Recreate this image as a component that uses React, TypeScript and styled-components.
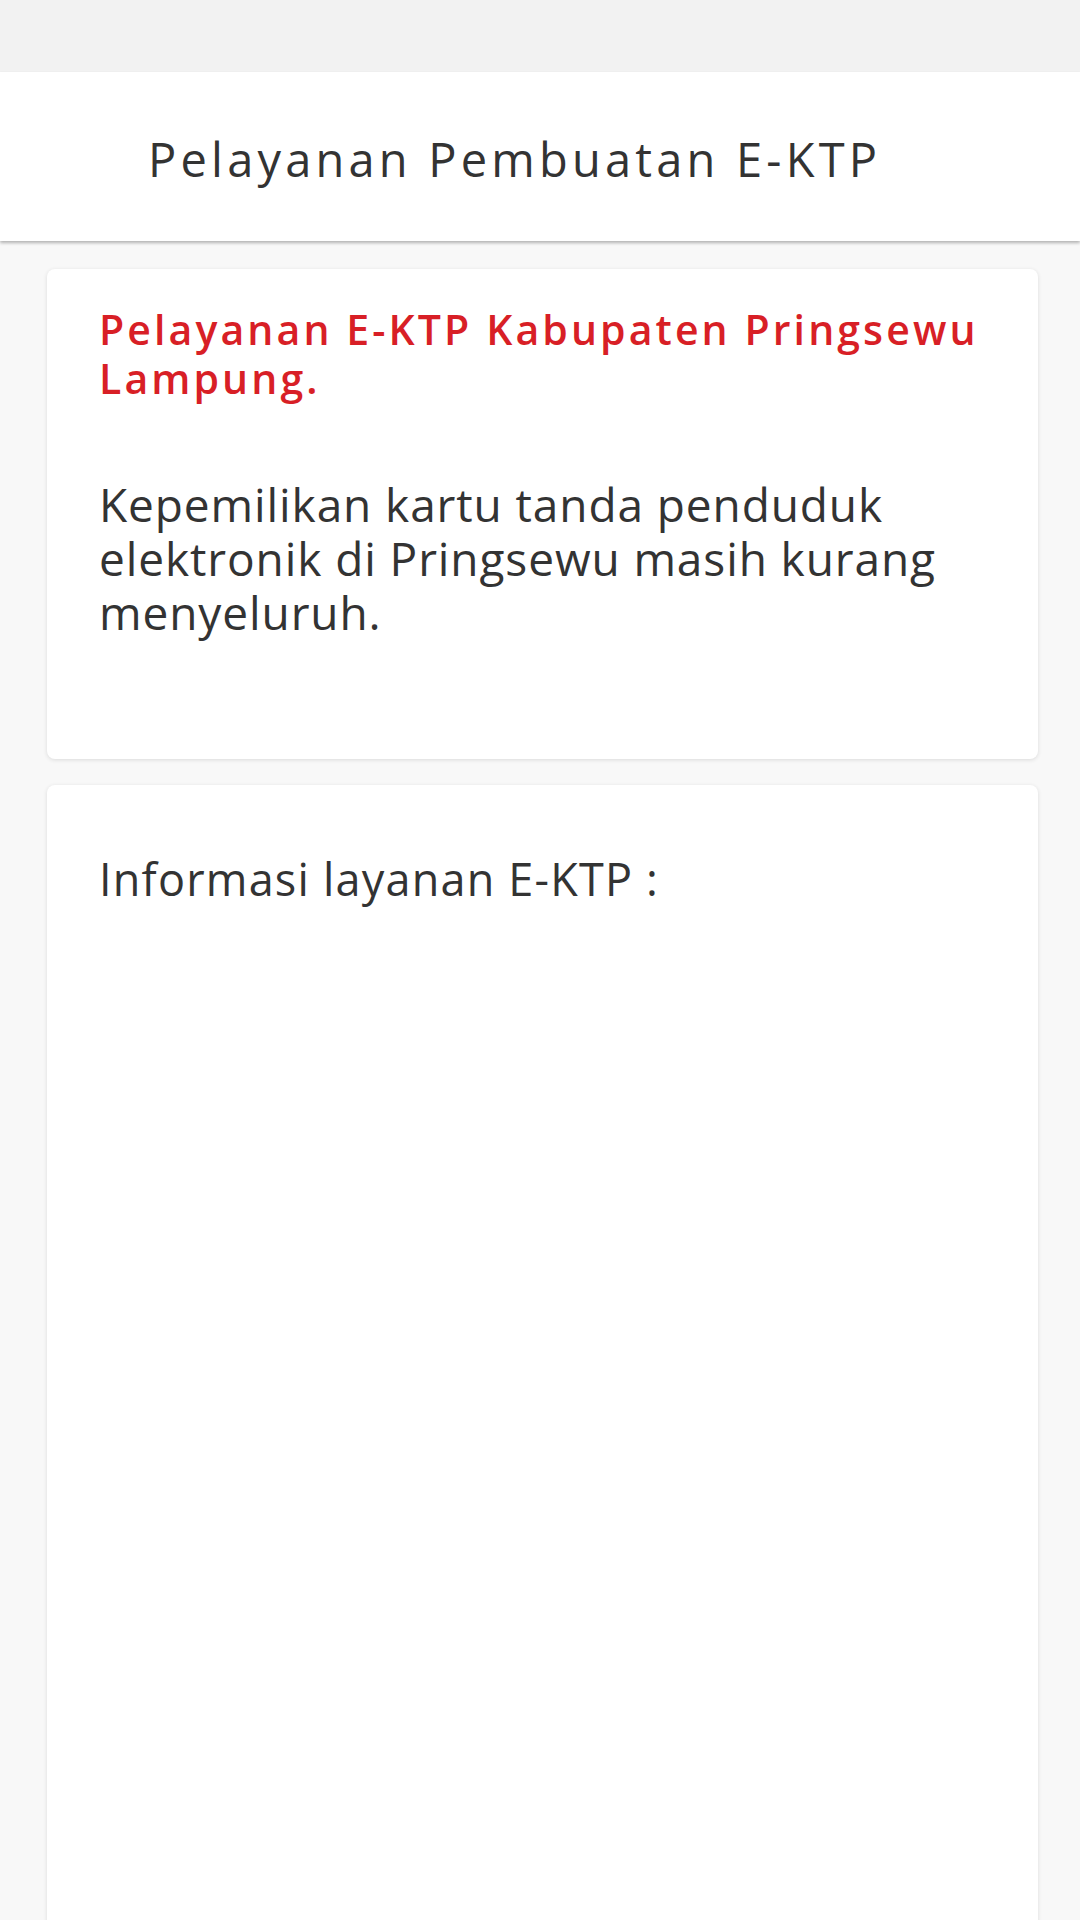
import React, { FC } from "react";
import styled, { createGlobalStyle } from "styled-components";

const GlobalStyle = createGlobalStyle`
  html, body {
    margin: 0;
    padding: 0;
    background: #f8f8f8;
    font-family: "Open Sans", "DejaVu Sans", sans-serif;
    color: #333333;
  }
  body {
    height: 1920px;
    overflow: hidden;
  }
`;

const App: FC = () => {
  return (
    <Page>
      <GlobalStyle />
      <StatusBar />
      <Header>
        <Title>Pelayanan Pembuatan E-KTP</Title>
      </Header>
      <Content>
        <Card>
          <Heading>Pelayanan E-KTP Kabupaten Pringsewu Lampung.</Heading>
          <Body>
            Kepemilikan kartu tanda penduduk elektronik di Pringsewu masih
            kurang menyeluruh.
          </Body>
        </Card>
        <Card tall>
          <InfoLabel>Informasi layanan E-KTP :</InfoLabel>
        </Card>
      </Content>
    </Page>
  );
};

export default App;

const Page = styled.div`
  width: 1080px;
  min-height: 1920px;
  background: #f8f8f8;
`;

const StatusBar = styled.div`
  height: 72px;
  background: #f2f2f2;
`;

const Header = styled.header`
  height: 169px;
  background: #ffffff;
  display: flex;
  align-items: center;
  padding: 5px 0 0 148px;
  box-sizing: border-box;
  box-shadow: 0 2px 3px rgba(0, 0, 0, 0.28);
  position: relative;
  z-index: 1;
`;

const Title = styled.h1`
  margin: 0;
  font-size: 47px;
  font-weight: 400;
  color: #333333;
  letter-spacing: 4.2px;
`;

const Content = styled.main`
  display: flex;
  flex-direction: column;
  gap: 26px;
  padding: 28px 42px 0 47px;
`;

const Card = styled.section<{ tall?: boolean }>`
  background: #ffffff;
  border-radius: 8px;
  box-shadow: 0 1px 4px rgba(0, 0, 0, 0.12);
  box-sizing: border-box;
  padding: ${(p) => (p.tall ? "67px 52px 0" : "36px 52px 0")};
  height: ${(p) => (p.tall ? "1300px" : "490px")};
`;

const Heading = styled.h2`
  margin: 0;
  font-size: 41px;
  line-height: 49px;
  font-weight: 600;
  color: #d81f26;
  letter-spacing: 3.1px;
`;

const Body = styled.p`
  margin: 74px 0 0;
  font-size: 46px;
  line-height: 54px;
  font-weight: 400;
  color: #333333;
  letter-spacing: 0.9px;
`;

const InfoLabel = styled.p`
  margin: 0;
  font-size: 45px;
  line-height: 54px;
  font-weight: 400;
  color: #333333;
  letter-spacing: 1.2px;
`;
